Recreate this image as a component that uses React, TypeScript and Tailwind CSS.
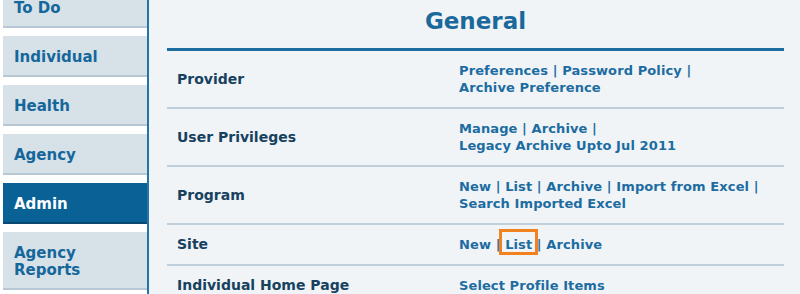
import { type JSX } from 'react'

type Tab = { label: string; lines?: string[]; active?: boolean }

const tabs: Tab[] = [
  { label: 'To Do' },
  { label: 'Individual' },
  { label: 'Health' },
  { label: 'Agency' },
  { label: 'Admin', active: true },
  { label: 'Agency Reports', lines: ['Agency', 'Reports'] },
]

type Link = { text: string; boxed?: boolean }
type Row = { name: string; lines: Link[][] }

const rows: Row[] = [
  {
    name: 'Provider',
    lines: [[{ text: 'Preferences' }, { text: 'Password Policy' }, { text: '' }], [{ text: 'Archive Preference' }]],
  },
  {
    name: 'User Privileges',
    lines: [[{ text: 'Manage' }, { text: 'Archive' }, { text: '' }], [{ text: 'Legacy Archive Upto Jul 2011' }]],
  },
  {
    name: 'Program',
    lines: [
      [{ text: 'New' }, { text: 'List' }, { text: 'Archive' }, { text: 'Import from Excel' }, { text: '' }],
      [{ text: 'Search Imported Excel' }],
    ],
  },
  {
    name: 'Site',
    lines: [[{ text: 'New' }, { text: 'List', boxed: true }, { text: 'Archive' }]],
  },
  {
    name: 'Individual Home Page',
    lines: [[{ text: 'Select Profile Items' }]],
  },
]

function SideTab({ tab }: { tab: Tab }): JSX.Element {
  const lines = tab.lines ?? [tab.label]
  return (
    <div
      className={
        tab.active
          ? 'bg-[#0a6195] border-b-2 border-[#0a4a72] text-white pl-[11px] pt-[13px] pb-[9px]'
          : 'bg-[#d7e1e8] border-b-2 border-[#b7c8d4] text-[#15679b] pl-[11px] pt-[13px] pb-[9px]'
      }
    >
      {lines.map((line) => (
        <div key={line} className="text-[15px] leading-[17px] font-bold">
          {line}
        </div>
      ))}
    </div>
  )
}

function LinkLine({ links }: { links: Link[] }): JSX.Element {
  return (
    <div className="whitespace-nowrap tracking-[0.1px]">
      {links.map((link, i) => (
        <span key={i}>
          {i > 0 && ' | '}
          {link.boxed ? (
            <span className="relative">
              {link.text}
              <span className="absolute -left-[6px] -right-[6px] -top-[8px] -bottom-[3px] border-[3px] border-[#f28220]" />
            </span>
          ) : (
            link.text
          )}
        </span>
      ))}
    </div>
  )
}

export default function App(): JSX.Element {
  return (
    <div
      className="flex w-[800px] h-[294px] overflow-hidden bg-white"
      style={{ fontFamily: '"DejaVu Sans", Verdana, sans-serif' }}
    >
      <aside className="w-[147px] shrink-0 pl-[3px]">
        <div className="-mt-[13px] flex flex-col gap-[8px]">
          {tabs.map((tab) => (
            <SideTab key={tab.label} tab={tab} />
          ))}
        </div>
      </aside>
      <div className="w-[2px] bg-[#2274aa] shrink-0" />
      <main className="flex-1 bg-[#f0f4f6] pl-[18px] pr-[16px]">
        <h1 className="h-[48px] pt-[7px] text-center text-[23px] leading-[28px] font-bold text-[#1b689b]">
          General
        </h1>
        <div className="border-t-[3px] border-[#1c6c9f]">
          {rows.map((row) => (
            <div
              key={row.name}
              className="grid grid-cols-[292px_1fr] items-center border-b-2 border-[#c0cfd9] pt-[11px] pb-[11px]"
            >
              <div className="pl-[10px] text-[14px] leading-[17px] font-bold text-[#17415f]">{row.name}</div>
              <div className="text-[13px] leading-[17px] font-bold text-[#1c6ca2]">
                {row.lines.map((line, i) => (
                  <LinkLine key={i} links={line} />
                ))}
              </div>
            </div>
          ))}
        </div>
      </main>
    </div>
  )
}
